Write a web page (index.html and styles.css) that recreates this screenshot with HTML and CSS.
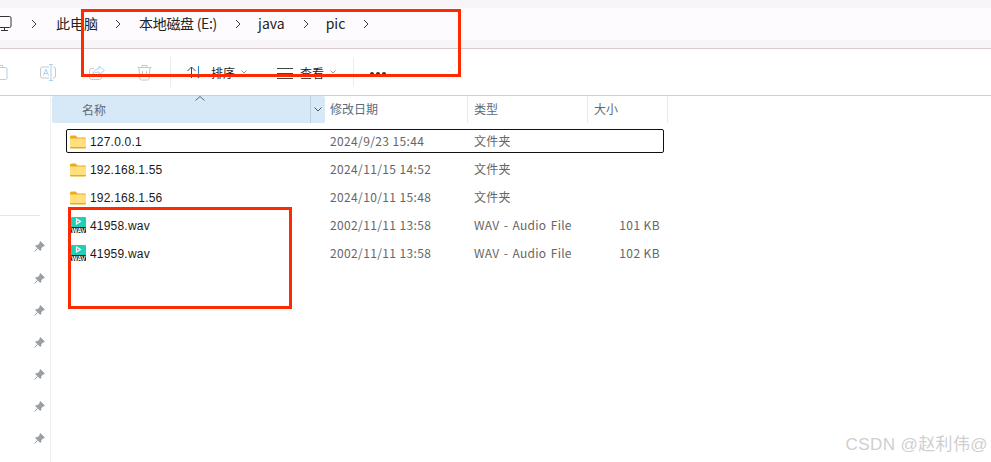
FILE: index.html
```html
<!DOCTYPE html>
<html lang="zh-CN">
<head>
<meta charset="utf-8">
<title>pic</title>
<link rel="stylesheet" href="styles.css">
</head>
<body>
<header class="top">
  <nav class="crumbs">
    <svg class="pc" width="12" height="18" viewBox="0 0 12 18"><path d="M-4 1.500H9.500a1.500 1.500 0 0 1 1.500 1.500v8a1.500 1.500 0 0 1-1.500 1.500H-4M1 15.500H8M4.500 12.500V15.500" fill="none" stroke="#333" stroke-width="1"/></svg>
    <svg class="sep first" width="6" height="10" viewBox="0 0 6 10"><path d="M1 1l4 4-4 4" fill="none" stroke="#444"/></svg>
    <span class="crumb">此电脑</span>
    <svg class="sep" width="6" height="10" viewBox="0 0 6 10"><path d="M1 1l4 4-4 4" fill="none" stroke="#444"/></svg>
    <span class="crumb crumb-drive">本地磁盘 (E:)</span>
    <svg class="sep" width="6" height="10" viewBox="0 0 6 10"><path d="M1 1l4 4-4 4" fill="none" stroke="#444"/></svg>
    <span class="crumb">java</span>
    <svg class="sep" width="6" height="10" viewBox="0 0 6 10"><path d="M1 1l4 4-4 4" fill="none" stroke="#444"/></svg>
    <span class="crumb">pic</span>
    <svg class="sep" width="6" height="10" viewBox="0 0 6 10"><path d="M1 1l4 4-4 4" fill="none" stroke="#444"/></svg>
  </nav>
</header>
<section class="toolbar">
  <div class="tool-group tools-left">
    <svg class="ti-paste" width="8" height="17" viewBox="0 0 8 17"><path d="M-6 3.500H5.500a1.500 1.500 0 0 1 1.500 1.500V14a1.500 1.500 0 0 1-1.500 1.500H-6" fill="none" stroke="#a8d2f0"/><path d="M-2 1.500H2.500V4" fill="none" stroke="#c8c8c8"/></svg>
    <svg class="ti-rename" width="17" height="17" viewBox="0 0 17 17"><rect x=".5" y="3" width="15" height="11" rx="2" fill="none" stroke="#c8c8c8"/><rect x="9" y="1" width="4" height="15" fill="#fff"/><path d="M9 .5h4M11 .5v16M9 16.500h4" fill="none" stroke="#a8d2f0"/><path d="M3.500 11.500L6 5l2.500 6.500M4.500 9.500h3" fill="none" stroke="#a8d2f0"/></svg>
    <svg class="ti-share" width="16" height="17" viewBox="0 0 16 17"><path d="M5 4.500H2.500a2 2 0 0 0-2 2v7a2 2 0 0 0 2 2h8a2 2 0 0 0 2-2v-2" fill="none" stroke="#c8c8c8"/><path d="M4 10c0-3 3-5 6-5V2l5.500 4.500L10 10.500V8c-2.500 0-4.500 .5-6 2z" fill="none" stroke="#a8d2f0"/></svg>
    <svg class="ti-trash" width="15" height="17" viewBox="0 0 15 17"><path d="M.5 3.500h14M5 3.500V1.500h5v2M2 3.500l1 11.500a1.200 1.200 0 0 0 1.200 1h6.600a1.200 1.200 0 0 0 1.200-1l1-11.500M5.500 7v6M9.500 7v6" fill="none" stroke="#c8c8c8"/></svg>
  </div>
  <div class="tool-group sort">
    <svg class="ti-sort" width="14" height="13" viewBox="0 0 14 13"><path d="M.5 5l4-4 4 4M4.500 1v11" fill="none" stroke="#444"/><path d="M11.500 0v10" stroke="#1a86d8" fill="none"/><path d="M9 9.500h5L11.500 12.500z" fill="#1a86d8"/></svg>
    <span class="tool-label">排序</span>
    <svg class="caret" width="6" height="4" viewBox="0 0 6 4"><path d="M.5 .5L3 3 5.500 .5" fill="none" stroke="#999"/></svg>
    <svg class="ti-view" width="16" height="12" viewBox="0 0 16 12"><path d="M0 .5h16M0 5.500h16M0 10.500h16" stroke="#444" fill="none"/></svg>
    <span class="tool-label">查看</span>
    <svg class="caret" width="6" height="4" viewBox="0 0 6 4"><path d="M.5 .5L3 3 5.500 .5" fill="none" stroke="#999"/></svg>
  </div>
  <div class="tool-group more">
    <span class="dot"></span><span class="dot"></span><span class="dot"></span>
  </div>
</section>
<main class="body">
  <aside class="side">
    <div class="side-rule"></div>
    <ul class="pins">
      <li class="pin"><svg width="11" height="11" viewBox="0 0 11 11"><path class="pin-head" d="M6.500 .5L10.500 4.500 9.800 5.200 8.800 5 7 7.500 7 9 6 9.500 1.500 5 2.200 4.200 3.800 4.200 5.800 2.400 5.700 1.300z"/><path class="pin-needle" d="M3.700 7.300L.5 10.500"/></svg></li>
      <li class="pin"><svg width="11" height="11" viewBox="0 0 11 11"><path class="pin-head" d="M6.500 .5L10.500 4.500 9.800 5.200 8.800 5 7 7.500 7 9 6 9.500 1.500 5 2.200 4.200 3.800 4.200 5.800 2.400 5.700 1.300z"/><path class="pin-needle" d="M3.700 7.300L.5 10.500"/></svg></li>
      <li class="pin"><svg width="11" height="11" viewBox="0 0 11 11"><path class="pin-head" d="M6.500 .5L10.500 4.500 9.800 5.200 8.800 5 7 7.500 7 9 6 9.500 1.500 5 2.200 4.200 3.800 4.200 5.800 2.400 5.700 1.300z"/><path class="pin-needle" d="M3.700 7.300L.5 10.500"/></svg></li>
      <li class="pin"><svg width="11" height="11" viewBox="0 0 11 11"><path class="pin-head" d="M6.500 .5L10.500 4.500 9.800 5.200 8.800 5 7 7.500 7 9 6 9.500 1.500 5 2.200 4.200 3.800 4.200 5.800 2.400 5.700 1.300z"/><path class="pin-needle" d="M3.700 7.300L.5 10.500"/></svg></li>
      <li class="pin"><svg width="11" height="11" viewBox="0 0 11 11"><path class="pin-head" d="M6.500 .5L10.500 4.500 9.800 5.200 8.800 5 7 7.500 7 9 6 9.500 1.500 5 2.200 4.200 3.800 4.200 5.800 2.400 5.700 1.300z"/><path class="pin-needle" d="M3.700 7.300L.5 10.500"/></svg></li>
      <li class="pin"><svg width="11" height="11" viewBox="0 0 11 11"><path class="pin-head" d="M6.500 .5L10.500 4.500 9.800 5.200 8.800 5 7 7.500 7 9 6 9.500 1.500 5 2.200 4.200 3.800 4.200 5.800 2.400 5.700 1.300z"/><path class="pin-needle" d="M3.700 7.300L.5 10.500"/></svg></li>
      <li class="pin"><svg width="11" height="11" viewBox="0 0 11 11"><path class="pin-head" d="M6.500 .5L10.500 4.500 9.800 5.200 8.800 5 7 7.500 7 9 6 9.500 1.500 5 2.200 4.200 3.800 4.200 5.800 2.400 5.700 1.300z"/><path class="pin-needle" d="M3.700 7.300L.5 10.500"/></svg></li>
    </ul>
  </aside>
  <section class="list">
    <div class="cols">
      <div class="col col-name"><span>名称</span><svg class="sort-up" width="10" height="5" viewBox="0 0 10 5"><path d="M.5 4.500L5 .5l4.500 4" fill="none" stroke="#666"/></svg><div class="col-drop"><svg width="8" height="5" viewBox="0 0 8 5"><path d="M.5 .5L4 4 7.500 .5" fill="none" stroke="#555"/></svg></div></div>
      <div class="col col-date"><span>修改日期</span></div>
      <div class="col col-type"><span>类型</span></div>
      <div class="col col-size"><span>大小</span></div>
    </div>
    <div class="rows">
      <div class="row focused">
        <div class="c-name"><svg class="folder" width="16" height="14" viewBox="0 0 16 14"><path d="M0 2a1.500 1.500 0 0 1 1.500-1.500h4L7.500 2.500H15a1 1 0 0 1 1 1V12.500a1 1 0 0 1-1 1H1a1 1 0 0 1-1-1z" fill="#efa91a"/><rect y="3.500" width="16" height="8.500" fill="#ffdf7e"/></svg><span>127.0.0.1</span></div>
        <div class="c-date">2024/9/23 15:44</div><div class="c-type">文件夹</div><div class="c-size"></div>
      </div>
      <div class="row">
        <div class="c-name"><svg class="folder" width="16" height="14" viewBox="0 0 16 14"><path d="M0 2a1.500 1.500 0 0 1 1.500-1.500h4L7.500 2.500H15a1 1 0 0 1 1 1V12.500a1 1 0 0 1-1 1H1a1 1 0 0 1-1-1z" fill="#efa91a"/><rect y="3.500" width="16" height="8.500" fill="#ffdf7e"/></svg><span>192.168.1.55</span></div>
        <div class="c-date">2024/11/15 14:52</div><div class="c-type">文件夹</div><div class="c-size"></div>
      </div>
      <div class="row">
        <div class="c-name"><svg class="folder" width="16" height="14" viewBox="0 0 16 14"><path d="M0 2a1.500 1.500 0 0 1 1.500-1.500h4L7.500 2.500H15a1 1 0 0 1 1 1V12.500a1 1 0 0 1-1 1H1a1 1 0 0 1-1-1z" fill="#efa91a"/><rect y="3.500" width="16" height="8.500" fill="#ffdf7e"/></svg><span>192.168.1.56</span></div>
        <div class="c-date">2024/10/11 15:48</div><div class="c-type">文件夹</div><div class="c-size"></div>
      </div>
      <div class="row">
        <div class="c-name"><svg class="wav" width="15" height="16" viewBox="0 0 15 16"><rect width="15" height="11" rx="1" fill="#20d0b6"/><rect y="10" width="15" height="6" rx="1" fill="#222"/><path d="M5.500 2l4 2.500-4 2.500z" fill="none" stroke="#fff" stroke-width="1.200"/><text class="wav-text" x="7.500" y="15.500" textLength="14" lengthAdjust="spacingAndGlyphs">WAV</text></svg><span>41958.wav</span></div>
        <div class="c-date">2002/11/11 13:58</div><div class="c-type">WAV - Audio File</div><div class="c-size">101 KB</div>
      </div>
      <div class="row">
        <div class="c-name"><svg class="wav" width="15" height="16" viewBox="0 0 15 16"><rect width="15" height="11" rx="1" fill="#20d0b6"/><rect y="10" width="15" height="6" rx="1" fill="#222"/><path d="M5.500 2l4 2.500-4 2.500z" fill="none" stroke="#fff" stroke-width="1.200"/><text class="wav-text" x="7.500" y="15.500" textLength="14" lengthAdjust="spacingAndGlyphs">WAV</text></svg><span>41959.wav</span></div>
        <div class="c-date">2002/11/11 13:58</div><div class="c-type">WAV - Audio File</div><div class="c-size">102 KB</div>
      </div>
    </div>
  </section>
</main>
<div class="mark mark-top"></div>
<div class="mark mark-files"></div>
<div class="watermark">CSDN @赵利伟@</div>
</body>
</html>
```
FILE: styles.css
```css
* { box-sizing: border-box; }
html, body { margin: 0; padding: 0; }
body {
  position: relative;
  width: 991px;
  height: 462px;
  overflow: hidden;
  background: #fff;
  font-family: "Liberation Sans", "Noto Sans CJK SC", sans-serif;
  font-size: 12px;
  color: #1a1a1a;
}
ul { margin: 0; padding: 0; list-style: none; }
svg { display: block; flex: none; }

.top {
  height: 49px;
  padding: 8px 0;
  background: #f9f4f7;
  border-bottom: 1px solid #d9cdd5;
}
.crumbs {
  display: flex;
  align-items: center;
  height: 32px;
  padding-bottom: 2px;
  background: #fdfbfd;
  font-size: 14px;
  font-family: "Noto Sans CJK SC", sans-serif;
  color: #222;
}
.pc { margin-top: 2px; }
.sep { margin: 2px 18px 0 17px; }
.sep.first { margin-left: 19px; margin-right: 19px; }
.crumb { white-space: nowrap; }
.crumb-drive { letter-spacing: -0.3px; }
.crumb + .sep + .crumb + .sep { margin-left: 18px; margin-right: 17px; }

.toolbar {
  display: flex;
  height: 47px;
  border-bottom: 1px solid #d9cdd5;
  align-items: stretch;
  padding: 8px 0;
}
.tool-group { display: flex; align-items: center; }
.tools-left { width: 170px; }
.ti-paste { margin-right: 32px; }
.ti-rename { margin-right: 32px; }
.ti-share { margin-right: 32px; }
.sort {
  width: 184px;
  border-left: 1px solid #ececec;
  border-right: 1px solid #ececec;
  padding-left: 16px;
}
.ti-sort { margin-right: 10px; }
.tool-label { font-family: "Noto Sans CJK SC", sans-serif; font-size: 12px; color: #222; margin-right: 6px; }
.caret { margin-right: 30px; }
.caret:last-child { margin-right: 0; }
.ti-view { margin-top: 3px; margin-right: 7px; }
.more { padding-left: 16px; padding-top: 3px; gap: 2px; }
.dot { width: 4px; height: 3px; border-radius: 50%; background: #333; }

.body { display: flex; height: 366px; }
.side {
  width: 51px;
  border-right: 1px solid #f0f0f0;
  padding-top: 119px;
}
.side-rule { height: 1px; width: 40px; background: #e5e5e5; }
.pins { padding: 25px 0 0 34px; display: flex; flex-direction: column; gap: 21px; }
.pin { height: 11px; }
.pin-head { fill: #98a0a6; stroke: #98a0a6; stroke-width: 0.6; }
.pin-needle { fill: none; stroke: #98a0a6; }

.list { flex: 1; font-family: "Noto Sans CJK SC", sans-serif; }
.cols { display: flex; height: 27px; color: #5b6b7c; font-size: 12px; }
.col { display: flex; align-items: center; padding-left: 6px; padding-bottom: 2px; border-right: 1px solid #eaeaea; }
.col-name {
  position: relative;
  width: 273px;
  padding-left: 30px;
  padding-bottom: 0;
  margin-left: 1px;
  background: #d7e8f6;
  border-radius: 2px;
  border-right: 0;
}
.sort-up { position: absolute; left: 143px; top: 0; }
.col-drop {
  position: absolute;
  right: 0;
  top: 0;
  bottom: 0;
  width: 15px;
  border-left: 1px solid #b9cfdf;
  display: flex;
  align-items: center;
  justify-content: center;
}
.col-date { width: 143px; padding-left: 5px; }
.col-type { width: 120px; }
.col-size { width: 80px; }

.rows { display: flex; flex-direction: column; padding: 6px 0 0 15px; }
.row {
  display: flex;
  align-items: center;
  width: 598px;
  height: 24px;
  margin-bottom: 4px;
  border: 1px solid transparent;
  border-radius: 2px;
  font-size: 12px;
}
.row.focused { border-color: #111; }
.c-name {
  display: flex;
  align-items: center;
  width: 263px;
  padding-left: 3px;
  padding-top: 2px;
  font-family: "Liberation Sans", "Noto Sans CJK SC", sans-serif;
  color: #1a1a1a;
}
.c-name span { margin-left: 4px; letter-spacing: 0.2px; }
.wav { margin-left: 1px; margin-top: -2px; }
.wav-text {
  font-family: "Liberation Sans", sans-serif;
  font-size: 6.5px;
  font-weight: 700;
  fill: #fff;
  text-anchor: middle;
}
.c-date, .c-type, .c-size { color: #666; font-size: 12px; padding-bottom: 2px; }
.c-date { width: 144px; letter-spacing: 0.37px; }
.c-type { width: 120px; letter-spacing: 0.25px; word-spacing: 1.5px; }
.c-size { flex: 1; text-align: right; padding-right: 3px; letter-spacing: 0.4px; }

.mark { position: absolute; border: 3px solid #ff2a00; }
.mark-top { left: 81px; top: 9px; width: 380px; height: 68px; }
.mark-files { left: 68px; top: 207px; width: 224px; height: 102px; }

.watermark {
  position: absolute;
  right: 3px;
  top: 435px;
  font-size: 17px;
  line-height: 20px;
  letter-spacing: 0.4px;
  color: #cfcfcf;
  font-family: "Liberation Sans", "Noto Sans CJK SC", sans-serif;
  white-space: nowrap;
}
```
